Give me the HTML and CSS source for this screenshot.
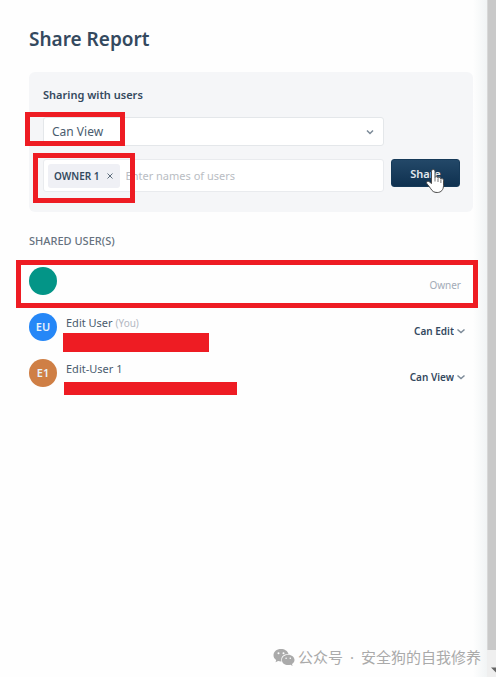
FILE: index.html
```html
<!DOCTYPE html>
<html lang="en">
<head>
  <meta charset="UTF-8" />
  <meta name="viewport" content="width=device-width, initial-scale=1.0"/>
  <title>Share Report</title>
  <link rel="stylesheet" href="styles.css">
</head>
<body>

<main class="dialog">
  <h1>Share Report</h1>

  <form class="share-form">
    <h2>Sharing with users</h2>
    <div class="form-grid">
      <div class="field">
        <select class="permission" aria-label="Permission">
          <option>Can View</option>
          <option>Can Edit</option>
        </select>
        <svg class="chevron" viewBox="0 0 10 10"><path d="M2 3.5l3 3 3-3"/></svg>
        <span class="mark mark-permission"></span>
      </div>
      <div class="field user-field">
        <span class="chip">OWNER 1 <button type="button" class="chip-remove" aria-label="Remove OWNER 1"><svg viewBox="0 0 8 8"><path d="M1.5 1.5l5 5M6.500 1.500l-5 5"/></svg></button></span>
        <input type="text" class="user-input" placeholder="Enter names of users" aria-label="Enter names of users" />
        <span class="mark mark-user"></span>
      </div>
      <button type="button" class="share-btn">Share
        <svg class="cursor" viewBox="0 0 20 26">
          <path d="M6.500 15.500V3.500c0-2.700 3.500-2.700 3.500 0v6c.5-1.300 2.900-1 3 .6.700-1 2.800-.7 2.900.9.900-.8 2.600-.3 2.600 1.300v5.200c0 4.300-2.400 7-6.300 7-3.300 0-5-1.300-6.500-3.900L1.800 15.500c-1-1.900 1-3 2.400-1.800z"/>
          <path class="fingers" d="M10 9.500v4M13 10.500v3.500M15.900 11.500V15"/>
        </svg>
      </button>
    </div>
  </form>

  <h3>SHARED USER(S)</h3>
  <ul class="user-list">
    <li class="user">
      <span class="avatar teal"></span>
      <span class="role">Owner</span>
      <span class="mark mark-owner"></span>
    </li>
    <li class="user">
      <span class="avatar blue">EU</span>
      <div class="user-info">
        <span class="user-name">Edit User <small>(You)</small></span>
        <span class="redacted"></span>
      </div>
      <div class="user-access">
        <select aria-label="Access for Edit User">
          <option>Can Edit</option>
          <option>Can View</option>
        </select>
        <svg class="chevron" viewBox="0 0 10 10"><path d="M1.500 3.500L5 6.500l3.500-3"/></svg>
      </div>
    </li>
    <li class="user">
      <span class="avatar orange">E1</span>
      <div class="user-info">
        <span class="user-name">Edit-User 1</span>
        <span class="redacted redacted-wide"></span>
      </div>
      <div class="user-access">
        <select aria-label="Access for Edit-User 1">
          <option>Can View</option>
          <option>Can Edit</option>
        </select>
        <svg class="chevron" viewBox="0 0 10 10"><path d="M1.500 3.500L5 6.500l3.500-3"/></svg>
      </div>
    </li>
  </ul>

  <footer class="credit" lang="zh">
    <svg viewBox="0 0 22 19">
      <path fill-rule="evenodd" d="M8 1C3.600 1 .5 3.700.5 7.200c0 2 1 3.600 2.700 4.800l-.7 2.300 2.600-1.300c1 .3 1.900.4 2.900.4h.5C7.300 9 10.600 6 15 6h.5C14.800 3 11.700 1 8 1zM5.500 4.200a1 1 0 110 2 1 1 0 010-2zM10.500 4.200a1 1 0 110 2 1 1 0 010-2z"/>
      <path fill-rule="evenodd" d="M15.200 6.700c-3.600 0-6.300 2.300-6.300 5.200s2.700 5.200 6.300 5.200c.8 0 1.600-.1 2.300-.4l2.100 1.200-.6-2c1.500-1 2.500-2.400 2.500-4 0-2.900-2.800-5.200-6.300-5.200zM13.100 9.400a.8.800 0 110 1.600.8.800 0 010-1.600zM17.300 9.400a.8.800 0 110 1.600.8.800 0 010-1.600z"/>
    </svg>
    <div class="credit-text"><span>公众号</span> <span>·</span> <span>安全狗的自我修养</span></div>
  </footer>
</main>

<div class="scrollbar"><div class="thumb"></div><svg viewBox="0 0 9 9"><path d="M4 2l5 5V2z"/></svg></div>

</body>
</html>
```

FILE: styles.css
```css
* {
  box-sizing: border-box;
}

body {
  margin: 0;
  min-height: 100vh;
  display: flex;
  background: #fefefe;
  color: #34495e;
  font-family: "Noto Sans", "Open Sans", sans-serif;
  font-size: 11px;
}

.dialog {
  flex: 1;
  display: flex;
  flex-direction: column;
  padding: 24px 14px 8px 29px;
  background: linear-gradient(to left, #f1f4f5, #fefefe 14px);
}

h1 {
  margin: 0 0 18px;
  font-size: 19px;
  line-height: 30px;
  font-weight: 600;
}

.share-form {
  padding: 14px 13px 20px 14px;
  border-radius: 6px;
  background: #f5f6f8;
}

h2 {
  margin: 0 0 13px;
  font-size: 11px;
  line-height: 18px;
  font-weight: 600;
}

.form-grid {
  display: grid;
  grid-template-columns: 1fr 69px;
  gap: 13px 7px;
  align-items: start;
}

.field {
  position: relative;
  grid-column: 1;
}

select,
input,
button {
  font: inherit;
  color: inherit;
}

select {
  appearance: none;
  border: none;
  background: transparent;
}

.permission {
  display: block;
  width: 100%;
  height: 29px;
  padding: 0 8px;
  border: 1px solid #e4e7ea;
  border-radius: 3px;
  background: #fff;
  color: #4a5c6e;
  font-size: 12px;
}

.chevron {
  position: absolute;
  right: 9px;
  top: 10px;
  width: 10px;
  height: 10px;
  fill: none;
  stroke: #7c8a98;
  stroke-width: 1.5;
  pointer-events: none;
}

.user-field {
  display: flex;
  align-items: center;
  gap: 6px;
  height: 33px;
  padding: 0 4px;
  border: 1px solid #e9ebee;
  border-radius: 3px;
  background: #fff;
}

.chip {
  display: flex;
  align-items: center;
  gap: 6px;
  height: 24px;
  padding: 0 6px;
  border-radius: 3px;
  background: #eff0f5;
  font-size: 10px;
  font-weight: 600;
  white-space: nowrap;
}

.chip-remove {
  display: flex;
  padding: 0;
  border: none;
  background: none;
}

.chip-remove svg {
  width: 8px;
  height: 8px;
  stroke: #5d6d7c;
}

.user-input {
  flex: 1;
  min-width: 0;
  padding: 0;
  border: none;
  outline: none;
  background: none;
}

.user-input::placeholder {
  color: #b9bdc3;
  opacity: 1;
}

.share-btn {
  position: relative;
  height: 28px;
  padding: 0;
  border: 1px solid #163a59;
  border-radius: 3px;
  background: linear-gradient(#234868, #0f3150);
  color: #e3e9ef;
  font-weight: 600;
  cursor: pointer;
}

.cursor {
  position: absolute;
  left: 33px;
  top: 8px;
  width: 20px;
  height: 26px;
  fill: #fff;
  stroke: #4a4a4a;
}

.cursor .fingers {
  fill: none;
  stroke: #777;
}

h3 {
  margin: 20px 0 10px;
  font-size: 11px;
  line-height: 18px;
  font-weight: 500;
  color: #66727e;
}

.user-list {
  margin: 0;
  padding: 0;
  list-style: none;
}

.user {
  position: relative;
  display: flex;
  gap: 9px;
  height: 46px;
  padding: 7px 7px 0 0;
}

.avatar {
  flex: none;
  width: 28px;
  height: 28px;
  border-radius: 50%;
  color: #e8f2fb;
  font-size: 11px;
  line-height: 28px;
  font-weight: 600;
  text-align: center;
}

.teal {
  background: #039587;
}

.blue {
  background: #2587f7;
}

.orange {
  background: #cf7f45;
}

.role {
  margin: 10px 5px 0 auto;
  font-size: 10px;
  line-height: 16px;
  color: #a3abb7;
}

.user-info {
  flex: 1;
  position: relative;
}

.user-name {
  display: block;
  line-height: 20px;
  color: #4a5c6e;
}

.user-name small {
  font-size: 10px;
  color: #b3b8c2;
}

.redacted {
  position: absolute;
  left: -3px;
  top: 20px;
  width: 146px;
  height: 19px;
  background: #ee1c23;
}

.redacted-wide {
  left: -2px;
  top: 23px;
  width: 173px;
  height: 13px;
}

.user-access {
  position: relative;
  align-self: flex-start;
  margin-top: 10px;
}

.user-access select {
  height: 16px;
  padding: 0 12px 0 0;
  font-size: 10px;
  font-weight: 600;
  text-align-last: right;
}

.user-access .chevron {
  right: 0;
  top: 3px;
}

/* red highlight boxes */
.mark {
  position: absolute;
  border: 5px solid #ee1c23;
  pointer-events: none;
}

.mark-permission {
  left: -18px;
  top: -5px;
  width: 100px;
  height: 34px;
}

.mark-user {
  left: -11px;
  top: -7px;
  width: 102px;
  height: 50px;
}

.mark-owner {
  left: -13px;
  right: -5px;
  top: 0;
  height: 48px;
}

.credit {
  display: flex;
  align-items: center;
  justify-content: flex-end;
  gap: 3px;
  margin: auto -8px 0 0;
  color: #aaa;
  font-family: "Noto Sans", "Noto Sans CJK SC", sans-serif;
  font-size: 15px;
  line-height: 24px;
}

.credit-text {
  display: flex;
  gap: 7px;
}

.credit svg {
  width: 22px;
  height: 19px;
  fill: #aaa;
}

.scrollbar {
  display: flex;
  flex-direction: column;
  width: 9px;
  background: #efefef;
}

.thumb {
  flex: 1;
  margin-bottom: 13px;
  border-left: 1px solid #d8d8d8;
  background: #c9c9c9;
}

.scrollbar svg {
  width: 9px;
  height: 14px;
  fill: #666;
}
```
